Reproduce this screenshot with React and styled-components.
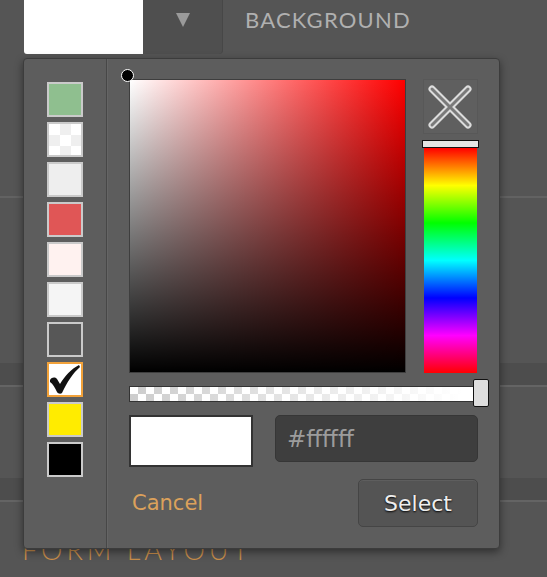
import React from "react";
import styled, { createGlobalStyle } from "styled-components";

const GlobalStyle = createGlobalStyle`
  html, body {
    margin: 0;
    padding: 0;
    background: #555555;
  }
  * {
    box-sizing: border-box;
  }
`;

const swatches = [
  { color: "#8fbf8f" },
  { checker: true },
  { color: "#eeeeee" },
  { color: "#e05656" },
  { color: "#fff2f0" },
  { color: "#f5f5f5" },
  { color: "#575757" },
  { color: "#ffffff", selected: true },
  { color: "#ffec00" },
  { color: "#000000" },
];

const App = () => {
  return (
    <Page>
      <GlobalStyle />
      <TopBar>
        <CurrentColor />
        <DropButton>
          <svg width="14" height="14" viewBox="0 0 14 14">
            <polygon points="0,0 14,0 7,14" fill="#9a9a9a" />
          </svg>
        </DropButton>
        <SectionLabel>BACKGROUND</SectionLabel>
      </TopBar>
      <Section $height={142} $line />
      <Section $height={165} />
      <Band />
      <Section $height={91} />
      <Band />
      <FormLabel>FORM LAYOUT</FormLabel>

      <Popup>
        <SwatchColumn>
          {swatches.map((s, i) => (
            <Swatch
              key={i}
              $color={s.color}
              $checker={s.checker}
              $selected={s.selected}
            >
              {s.selected && (
                <svg width="32" height="31" viewBox="0 0 32 31">
                  <path
                    d="M1 16 C3 13 6 13 8 15 L11 20 C16 12 22 5 30 1 L31 3 C24 9 18 18 13 29 C12 30 9 30 8 28 C6 24 4 20 1 18 Z"
                    fill="#111"
                  />
                </svg>
              )}
            </Swatch>
          ))}
        </SwatchColumn>
        <PickerPanel>
          <TopArea>
            <SatValBox>
              <PickDot />
            </SatValBox>
            <SideColumn>
              <ClearButton>
                <svg width="44" height="44" viewBox="0 0 44 44">
                  <g strokeLinecap="round">
                    <line x1="4" y1="4" x2="40" y2="40" stroke="#dcdcdc" strokeWidth="7" />
                    <line x1="40" y1="4" x2="4" y2="40" stroke="#dcdcdc" strokeWidth="7" />
                    <line x1="4" y1="4" x2="40" y2="40" stroke="#7a7a7a" strokeWidth="3" />
                    <line x1="40" y1="4" x2="4" y2="40" stroke="#7a7a7a" strokeWidth="3" />
                  </g>
                </svg>
              </ClearButton>
              <HueHandle />
              <HueBar />
            </SideColumn>
          </TopArea>
          <AlphaRow>
            <AlphaTrack />
            <AlphaHandle />
          </AlphaRow>
          <ValueRow>
            <Preview />
            <HexField>#ffffff</HexField>
          </ValueRow>
          <ActionRow>
            <CancelLink>Cancel</CancelLink>
            <SelectButton>Select</SelectButton>
          </ActionRow>
        </PickerPanel>
      </Popup>
    </Page>
  );
};

const Page = styled.div`
  position: relative;
  width: 547px;
  height: 577px;
  overflow: hidden;
  background: #555555;
  font-family: Lato, "Liberation Sans", sans-serif;
`;
const TopBar = styled.div`
  display: flex;
  align-items: flex-start;
  height: 56px;
  padding-left: 24px;
`;
const CurrentColor = styled.div`
  width: 119px;
  height: 54px;
  background: #ffffff;
  border-bottom-left-radius: 3px;
`;
const DropButton = styled.div`
  display: flex;
  justify-content: center;
  width: 80px;
  height: 54px;
  padding-top: 13px;
  background: #4f4f4f;
  border-right: 1px solid #474747;
  border-bottom-right-radius: 4px;
`;
const SectionLabel = styled.div`
  margin-left: 22px;
  padding-top: 9px;
  font-size: 22px;
  line-height: 22px;
  letter-spacing: 1.2px;
  color: #b0b0b0;
`;
const Section = styled.div`
  height: ${(p) => p.$height}px;
  border-bottom: ${(p) => (p.$line ? "2px solid #626262" : "none")};
`;
const Band = styled.div`
  height: 24px;
  background: #4d4d4d;
  border-bottom: 2px solid #646464;
`;
const FormLabel = styled.div`
  margin-top: 35px;
  padding-left: 22px;
  font-size: 27px;
  line-height: 26px;
  font-weight: 300;
  letter-spacing: 4px;
  color: #c98e4b;
`;
const Popup = styled.div`
  position: absolute;
  left: 23px;
  top: 58px;
  width: 477px;
  height: 491px;
  display: flex;
  background: #5d5d5d;
  border: 1px solid #3c3c3c;
  border-radius: 4px;
  box-shadow: 0 3px 8px rgba(0, 0, 0, 0.45);
`;
const SwatchColumn = styled.div`
  display: flex;
  flex-direction: column;
  align-items: center;
  gap: 5px;
  width: 83px;
  padding-top: 23px;
  border-right: 1px solid #474747;
`;
const Swatch = styled.div`
  display: flex;
  align-items: center;
  justify-content: center;
  width: 36px;
  height: 35px;
  border: 2px solid ${(p) => (p.$selected ? "#f2a23a" : "#cacaca")};
  background: ${(p) =>
    p.$checker
      ? "conic-gradient(#efefef 90deg, #ffffff 90deg 180deg, #efefef 180deg 270deg, #ffffff 270deg) 0 0 / 22px 22px"
      : p.$color};
`;
const PickerPanel = styled.div`
  flex: 1;
  display: flex;
  flex-direction: column;
  padding: 20px 21px 21px 21px;
  border-left: 1px solid #656565;
`;
const TopArea = styled.div`
  display: flex;
  gap: 16px;
`;
const SatValBox = styled.div`
  position: relative;
  width: 277px;
  height: 294px;
  border: 1px solid #3e3e3e;
  background: linear-gradient(to bottom, rgba(0, 0, 0, 0), #000),
    linear-gradient(to right, #fff, #f00);
`;
const PickDot = styled.div`
  position: absolute;
  left: -9px;
  top: -11px;
  width: 13px;
  height: 13px;
  border-radius: 50%;
  background: #000;
  border: 1.5px solid #fff;
`;
const SideColumn = styled.div`
  display: flex;
  flex-direction: column;
  align-items: center;
  width: 56px;
`;
const ClearButton = styled.div`
  display: flex;
  align-items: center;
  justify-content: center;
  width: 55px;
  height: 55px;
  background: #5f5f5f;
  border: 1px solid #585858;
`;
const HueHandle = styled.div`
  width: 57px;
  height: 8px;
  margin-top: 6px;
  background: #e4e4e4;
  border: 1px solid #111;
`;
const HueBar = styled.div`
  flex: 1;
  width: 53px;
  background: linear-gradient(
    to bottom,
    #f00,
    #ff0,
    #0f0,
    #0ff,
    #00f,
    #f0f,
    #f00
  );
`;
const AlphaRow = styled.div`
  position: relative;
  margin-top: 13px;
  height: 16px;
`;
const AlphaTrack = styled.div`
  width: calc(100% + 3px);
  height: 16px;
  border: 1px solid #333;
  background: linear-gradient(to right, rgba(255, 255, 255, 0.15), #fff 95%),
    conic-gradient(#c4c4c4 90deg, #ffffff 90deg 180deg, #c4c4c4 180deg 270deg, #ffffff 270deg)
      0 0 / 16px 14px;
`;
const AlphaHandle = styled.div`
  position: absolute;
  right: -11px;
  top: -7px;
  width: 16px;
  height: 28px;
  background: #dedede;
  border: 1px solid #111;
  border-radius: 2px;
`;
const ValueRow = styled.div`
  display: flex;
  align-items: flex-start;
  justify-content: space-between;
  margin-top: 13px;
`;
const Preview = styled.div`
  width: 124px;
  height: 52px;
  background: #fff;
  border: 2px solid #333;
`;
const HexField = styled.div`
  display: flex;
  align-items: center;
  width: 203px;
  height: 47px;
  padding-left: 11px;
  background: #3e3e3e;
  border: 1px solid #363636;
  border-radius: 5px;
  font-family: "DejaVu Sans", Lato, sans-serif;
  font-size: 23px;
  color: #9c9c9c;
`;
const ActionRow = styled.div`
  display: flex;
  align-items: center;
  justify-content: space-between;
  margin-top: auto;
`;
const CancelLink = styled.div`
  padding-left: 3px;
  font-family: "DejaVu Sans", Lato, sans-serif;
  font-size: 21px;
  color: #dca15b;
  cursor: pointer;
`;
const SelectButton = styled.div`
  display: flex;
  align-items: center;
  justify-content: center;
  width: 120px;
  height: 48px;
  background: #545454;
  border: 1px solid #454545;
  border-radius: 5px;
  box-shadow: inset 0 1px 0 rgba(255, 255, 255, 0.06);
  font-family: "DejaVu Sans", Lato, sans-serif;
  font-size: 22px;
  color: #eeeeee;
  text-shadow: 0 1px 2px #000;
  cursor: pointer;
`;

export default App;
